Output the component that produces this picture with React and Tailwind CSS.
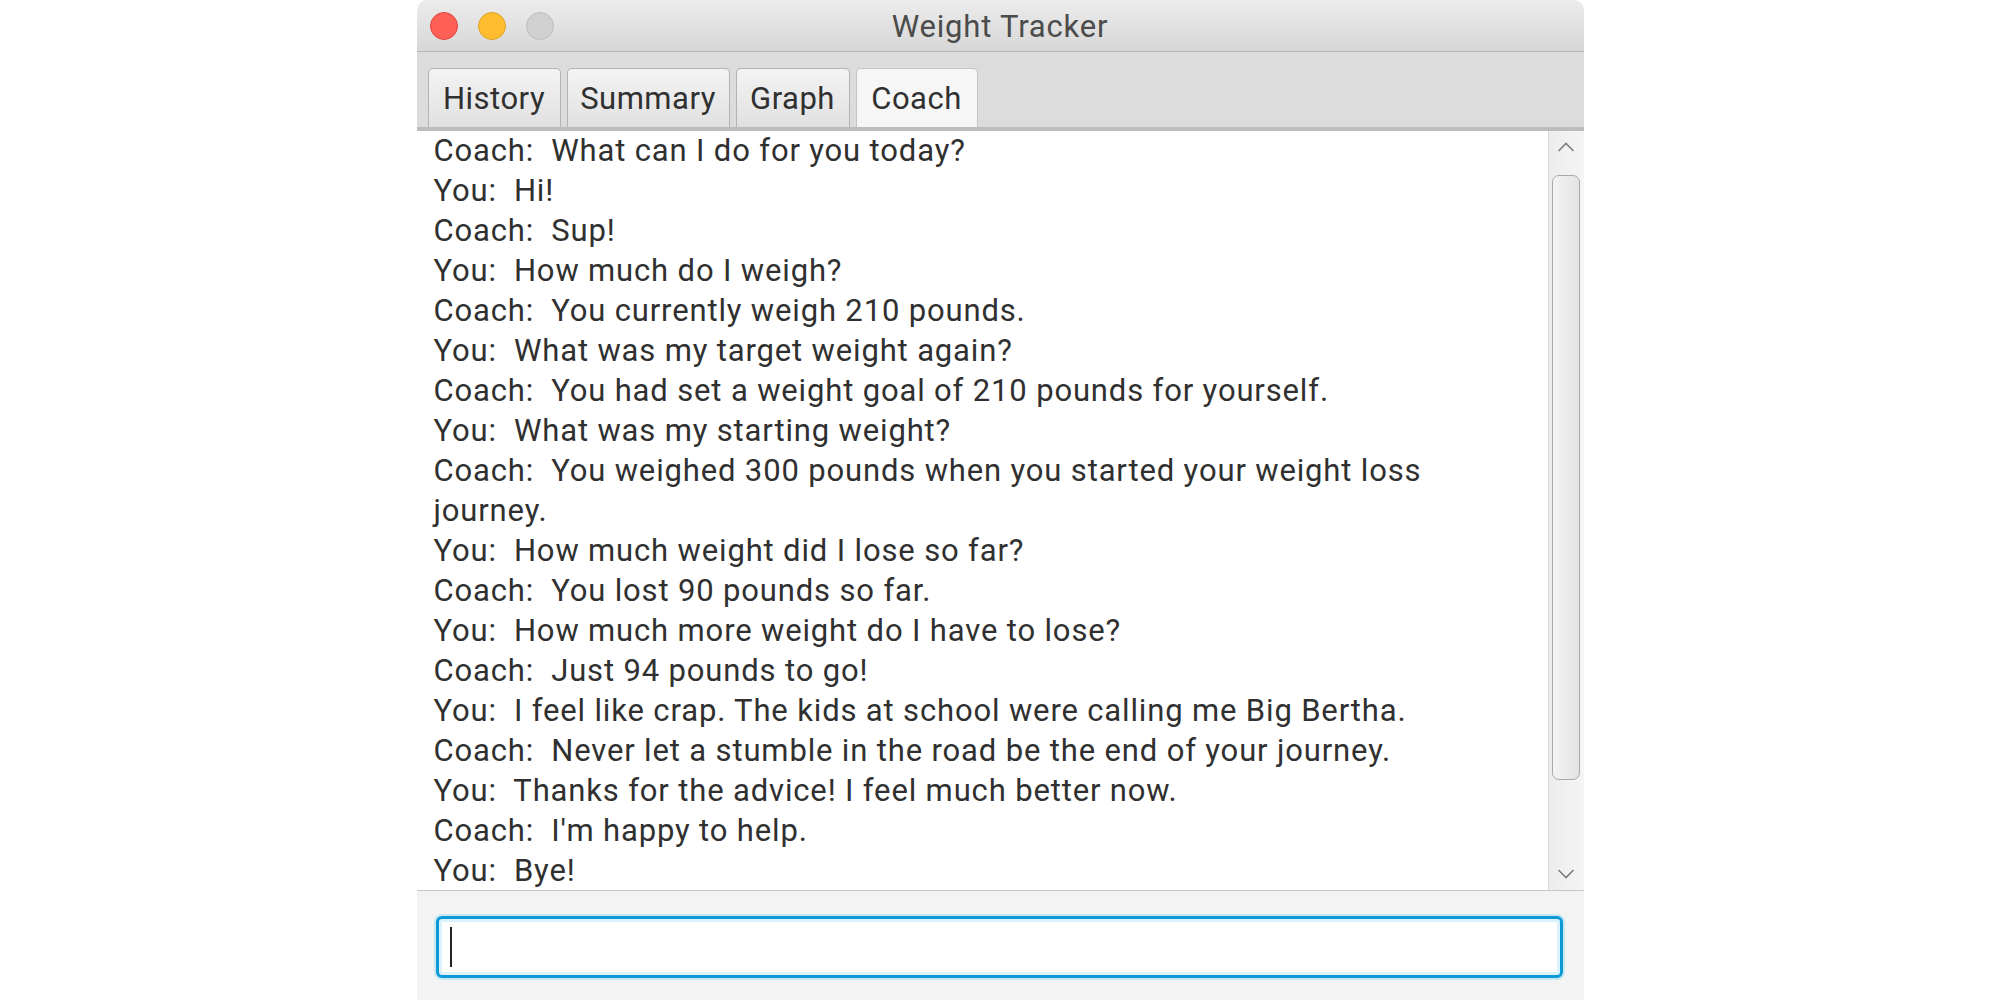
import React from "react";

// chat transcript, one entry per visual line
const lines = [
  "Coach:  What can I do for you today?",
  "You:  Hi!",
  "Coach:  Sup!",
  "You:  How much do I weigh?",
  "Coach:  You currently weigh 210 pounds.",
  "You:  What was my target weight again?",
  "Coach:  You had set a weight goal of 210 pounds for yourself.",
  "You:  What was my starting weight?",
  "Coach:  You weighed 300 pounds when you started your weight loss",
  "journey.",
  "You:  How much weight did I lose so far?",
  "Coach:  You lost 90 pounds so far.",
  "You:  How much more weight do I have to lose?",
  "Coach:  Just 94 pounds to go!",
  "You:  I feel like crap. The kids at school were calling me Big Bertha.",
  "Coach:  Never let a stumble in the road be the end of your journey.",
  "You:  Thanks for the advice! I feel much better now.",
  "Coach:  I'm happy to help.",
  "You:  Bye!",
];

function Chevron({ up }) {
  return (
    <svg width="18" height="10" viewBox="0 0 18 10">
      <path
        d={up ? "M1.5 9 L9 1.5 L16.5 9" : "M1.5 1 L9 8.5 L16.5 1"}
        fill="none"
        stroke="#7c7c7c"
        strokeWidth="1.6"
      />
    </svg>
  );
}

function App() {
  return (
    <div className="w-full h-[1000px] bg-white flex justify-center font-['Roboto',sans-serif] text-[#303030]">
      <div className="w-[1167px] h-full flex flex-col rounded-t-[10px] overflow-hidden">

        {/* TITLE BAR */}
        <div className="h-[52px] shrink-0 grid grid-cols-[1fr_auto_1fr] items-center bg-linear-to-b from-[#ececec] to-[#d7d7d7] border-b border-[#b4b4b4]">
          <div className="flex items-center gap-[20px] pl-[13px]">
            <div className="w-[28px] h-[28px] rounded-full bg-[#fe5f57] border border-[#e0443e]" />
            <div className="w-[28px] h-[28px] rounded-full bg-[#febc2e] border border-[#dea123]" />
            <div className="w-[28px] h-[28px] rounded-full bg-[#d0d0d0] border border-[#bdbdbd]" />
          </div>
          <div className="text-[31px] tracking-[0.8px] text-[#4b4b4b] leading-none pt-[2px]">Weight Tracker</div>
          <div />
        </div>

        {/* TABS */}
        <div className="h-[79px] shrink-0 bg-[#dcdcdc] border-b-4 border-[#bcbcbc] flex items-end gap-[6px] pl-[11px]">
          {[
            ["History", "w-[133px]", false],
            ["Summary", "w-[163px]", false],
            ["Graph", "w-[114px]", false],
            ["Coach", "w-[122px]", true],
          ].map(([label, w, active]) => (
            <div
              key={label}
              className={`${w} h-[59px] flex items-center justify-center pt-[2px] text-[31px] tracking-[0.5px] rounded-t-[5px] border border-b-0 ${
                active
                  ? "bg-[#f6f6f6] border-[#c4c4c4]"
                  : "bg-linear-to-b from-[#f3f3f3] to-[#e1e1e1] border-[#b3b3b3]"
              }`}
            >
              {label}
            </div>
          ))}
        </div>

        {/* TEXT AREA */}
        <div className="flex-1 flex bg-white min-h-0">
          <div className="flex-1 pl-[17px] overflow-hidden">
            {lines.map((l, i) => (
              <div key={i} className="h-[40px] leading-[40px] text-[31px] tracking-[0.85px] whitespace-pre">
                {l}
              </div>
            ))}
          </div>

          {/* scrollbar */}
          <div className="w-[36px] flex flex-col items-center border-l border-[#d6d6d6] bg-linear-to-r from-[#ededed] to-[#f5f5f5]">
            <div className="h-[32px] flex items-center justify-center">
              <Chevron up />
            </div>
            <div className="mt-[12px] w-[28px] h-[605px] rounded-[7px] border-[1.5px] border-[#a8a8a8] bg-linear-to-r from-[#f4f4f4] to-[#e3e3e3]" />
            <div className="flex-1" />
            <div className="h-[32px] flex items-center justify-center">
              <Chevron />
            </div>
          </div>
        </div>

        {/* INPUT */}
        <div className="h-[110px] shrink-0 bg-[#f3f3f3] border-t border-[#c6c6c6] pt-[25px] pl-[19px] pr-[21px]">
          <div className="h-[62px] rounded-[6px] border-[3px] border-[#0b9ad6] bg-white shadow-[0_0_0_2px_#c8e8f6,inset_0_0_0_3px_#dbf1fb] flex items-center pl-[11px]">
            <div className="w-[2px] h-[40px] bg-[#222222]" />
          </div>
        </div>

      </div>
    </div>
  );
}

export default App;
